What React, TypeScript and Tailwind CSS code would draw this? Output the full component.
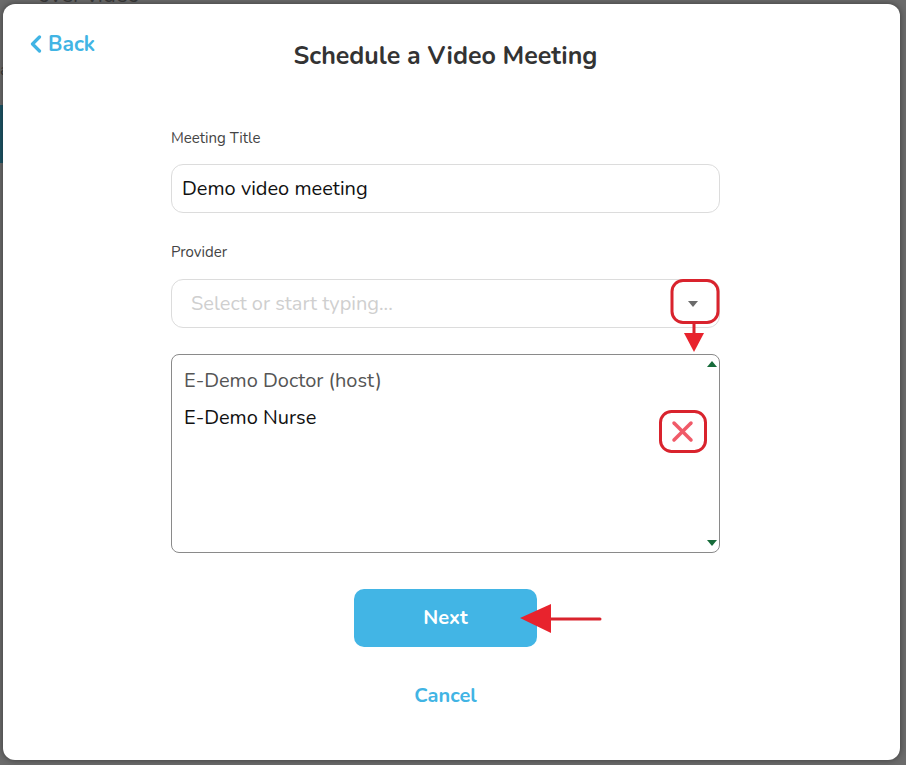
const font = { fontFamily: "Nunito, 'Open Sans', 'Noto Sans', sans-serif" }

function Annotations() {
  return (
    <svg className="pointer-events-none absolute left-0 top-0" width="906" height="765" viewBox="0 0 906 765">
      {/* dropdown caret callout */}
      <rect x="672" y="280.5" width="46" height="42" rx="11" fill="none" stroke="#d9232d" strokeWidth="3" />
      <line x1="694" y1="323" x2="694" y2="336" stroke="#d9232d" strokeWidth="3" />
      <polygon points="684,333 704,333 694,352" fill="#e8232d" />
      {/* remove callout */}
      <rect x="660.5" y="411.5" width="45" height="40" rx="11" fill="none" stroke="#d9232d" strokeWidth="3" />
      <line x1="674" y1="423" x2="691" y2="440" stroke="#f05a68" strokeWidth="3.5" strokeLinecap="round" />
      <line x1="691" y1="423" x2="674" y2="440" stroke="#f05a68" strokeWidth="3.5" strokeLinecap="round" />
      {/* next button arrow */}
      <line x1="548" y1="619" x2="600" y2="619" stroke="#d9232d" strokeWidth="3" strokeLinecap="round" />
      <polygon points="520,618 551,604 551,633" fill="#e8232d" />
    </svg>
  )
}

export default function App() {
  return (
    <div className="relative h-[765px] w-[906px] overflow-hidden bg-[#6b6b6b]" style={font}>
      {/* page behind the overlay */}
      <div className="absolute left-[38px] top-[-16px] text-[22px] leading-[22px] text-[#3a3a3a]">over video</div>
      <div className="absolute left-0 top-[58px] text-[16px] text-[#3a3a3a]">a</div>
      <div className="absolute left-0 top-[105px] h-[58px] w-[6px] bg-[#1d5566]" />

      <div className="relative flex h-full w-full pb-[5px] pl-[3px] pr-[6px] pt-[4px]">
        <div className="grid flex-1 grid-cols-[168px_549px_1fr] content-start rounded-[12px] bg-white shadow-[0_0_6px_rgba(0,0,0,0.45)]">
          {/* back */}
          <div className="pl-[27px] pt-[27px]">
            <button className="flex items-center gap-[6px] text-[21px] font-bold leading-[26px] text-[#41b4e4]">
              <svg width="12" height="18" viewBox="0 0 12 18" fill="none">
                <polyline points="9.5,2 2.5,9 9.5,16" stroke="#41b4e4" strokeWidth="3.2" strokeLinecap="round" strokeLinejoin="round" />
              </svg>
              Back
            </button>
          </div>

          <div className="flex flex-col">
            <h1 className="mt-[37px] text-center text-[25px] font-bold leading-[30px] text-[#333333]">
              Schedule a Video Meeting
            </h1>

            <label className="mt-[57px] text-[15px] leading-[20px] text-[#444444]">Meeting Title</label>
            <div className="mt-[16px] flex h-[49px] items-center rounded-[12px] border border-[#dcdcdc] px-[10px] text-[20px] text-[#111111]">
              Demo video meeting
            </div>

            <label className="mt-[29px] text-[15px] leading-[20px] text-[#444444]">Provider</label>
            <div className="mt-[17px] flex h-[49px] items-center justify-between rounded-[12px] border border-[#dcdcdc] pl-[19px] pr-[21px] text-[20px] text-[#cfcfcf]">
              <span>Select or start typing...</span>
              <span className="h-0 w-0 border-l-[5px] border-r-[5px] border-t-[6px] border-l-transparent border-r-transparent border-t-[#6b6b6b]" />
            </div>

            {/* list box */}
            <div className="mt-[26px] flex h-[199px] rounded-[8px] border border-[#8a8a8a]">
              <ul className="flex flex-1 flex-col gap-[11px] pl-[12px] pt-[13px] text-[20px] leading-[26px]">
                <li className="text-[#555555]">E-Demo Doctor (host)</li>
                <li className="text-[#111111]">E-Demo Nurse</li>
              </ul>
              <div className="flex w-[14px] flex-col items-center justify-between py-[6px]">
                <span className="h-0 w-0 border-b-[6px] border-l-[5px] border-r-[5px] border-b-[#166b3a] border-l-transparent border-r-transparent" />
                <span className="h-0 w-0 border-l-[5px] border-r-[5px] border-t-[6px] border-l-transparent border-r-transparent border-t-[#166b3a]" />
              </div>
            </div>

            <div className="mt-[36px] flex justify-center">
              <button className="h-[58px] w-[183px] rounded-[10px] bg-[#42b5e5] text-[20px] font-bold text-white">
                Next
              </button>
            </div>

            <div className="mt-[36px] flex justify-center">
              <button className="text-[20px] font-bold leading-[26px] text-[#41b4e4]">Cancel</button>
            </div>
          </div>

          <div />
        </div>
      </div>

      <Annotations />
    </div>
  )
}
